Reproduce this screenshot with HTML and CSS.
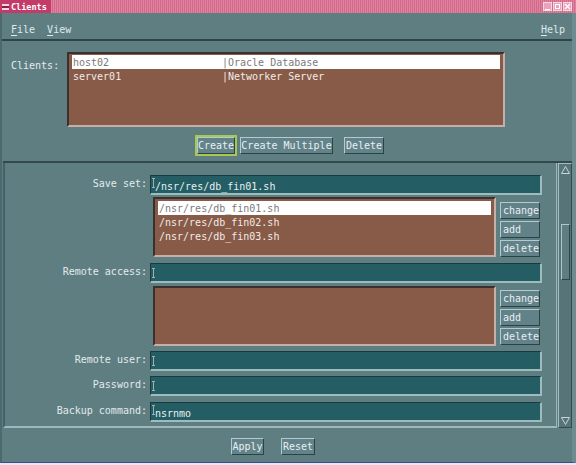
FILE: index.html
```html
<!DOCTYPE html>
<html>
<head>
<meta charset="utf-8">
<title>Clients</title>
<link rel="stylesheet" href="styles.css">
</head>
<body>
<div class="titlebar">
  <div class="title"><span class="ticon"></span><span class="ttext">Clients</span></div>
  <div class="tfill"></div>
  <div class="wbtns">
    <span class="wb"><svg width="9" height="9" viewBox="0 0 9 9"><path d="M2 7.5H7" stroke="#fff" stroke-width="1"/></svg></span>
    <span class="wb"><svg width="9" height="9" viewBox="0 0 9 9"><rect x="2.5" y="2.5" width="4" height="4" fill="none" stroke="#fff" stroke-width="1"/></svg></span>
    <span class="wb"><svg width="9" height="9" viewBox="0 0 9 9"><path d="M2 2L7 7M7 2L2 7" stroke="#fff" stroke-width="1.4"/></svg></span>
  </div>
</div>
<div class="window">
  <div class="menubar">
    <span class="menu"><u>F</u>ile</span>
    <span class="menu"><u>V</u>iew</span>
    <span class="menu menu-help"><u>H</u>elp</span>
  </div>
  <div class="top">
    <div class="clients">
      <div class="clabel">Clients:</div>
      <div class="list clist">
        <div class="row sel"><span class="c1">host02</span><span>|Oracle Database</span></div>
        <div class="row"><span class="c1">server01</span><span>|Networker Server</span></div>
      </div>
    </div>
    <div class="actions">
      <span class="focus"><span class="btn btn-create">Create</span></span>
      <span class="btn btn-multi">Create Multiple</span>
      <span class="btn btn-del">Delete</span>
    </div>
  </div>
  <div class="panel">
    <div class="form">
      <div class="frow">
        <div class="flabel">Save set:</div>
        <div class="field filled"><span class="caret"><svg width="3" height="10" viewBox="0 0 3 10"><path d="M0 0.5H3M1.5 0.5V9.5M0 9.5H3" stroke="#9fb0b2" stroke-width="1"/></svg></span><span>/nsr/res/db_fin01.sh</span></div>
      </div>
      <div class="lrow lrow-1">
        <div class="list slist">
          <div class="row sel">/nsr/res/db_fin01.sh</div>
          <div class="row">/nsr/res/db_fin02.sh</div>
          <div class="row">/nsr/res/db_fin03.sh</div>
        </div>
        <div class="lbtns">
          <span class="sbtn">change</span>
          <span class="sbtn">add</span>
          <span class="sbtn">delete</span>
        </div>
      </div>
      <div class="frow frow-ra">
        <div class="flabel">Remote access:</div>
        <div class="field"><span class="caret"><svg width="3" height="10" viewBox="0 0 3 10"><path d="M0 0.5H3M1.5 0.5V9.5M0 9.5H3" stroke="#9fb0b2" stroke-width="1"/></svg></span></div>
      </div>
      <div class="lrow lrow-2">
        <div class="list slist"></div>
        <div class="lbtns">
          <span class="sbtn">change</span>
          <span class="sbtn">add</span>
          <span class="sbtn">delete</span>
        </div>
      </div>
      <div class="frow frow-ru">
        <div class="flabel">Remote user:</div>
        <div class="field"><span class="caret"><svg width="3" height="10" viewBox="0 0 3 10"><path d="M0 0.5H3M1.5 0.5V9.5M0 9.5H3" stroke="#9fb0b2" stroke-width="1"/></svg></span></div>
      </div>
      <div class="frow frow-pw">
        <div class="flabel">Password:</div>
        <div class="field"><span class="caret"><svg width="3" height="10" viewBox="0 0 3 10"><path d="M0 0.5H3M1.5 0.5V9.5M0 9.5H3" stroke="#9fb0b2" stroke-width="1"/></svg></span></div>
      </div>
      <div class="frow frow-bc">
        <div class="flabel">Backup command:</div>
        <div class="field filled"><span class="caret"><svg width="3" height="10" viewBox="0 0 3 10"><path d="M0 0.5H3M1.5 0.5V9.5M0 9.5H3" stroke="#9fb0b2" stroke-width="1"/></svg></span><span>nsrnmo</span></div>
      </div>
    </div>
    <div class="vscroll">
      <div class="arrow"><svg width="11" height="10" viewBox="0 0 11 10"><path d="M5.5 1.5L9.5 8.5H1.5Z" fill="none" stroke="#c4d6d8" stroke-width="1"/></svg></div>
      <div class="trough"><div class="thumb"></div></div>
      <div class="arrow"><svg width="11" height="10" viewBox="0 0 11 10"><path d="M1.5 1.5H9.5L5.5 8.5Z" fill="none" stroke="#c4d6d8" stroke-width="1"/></svg></div>
    </div>
  </div>
  <div class="bottom">
    <span class="btn btn-apply">Apply</span>
    <span class="btn btn-reset">Reset</span>
  </div>
</div>
</body>
</html>
```

FILE: styles.css
```css
* { box-sizing: border-box; }
html, body { margin: 0; padding: 0; }
body {
  width: 576px;
  height: 465px;
  overflow: hidden;
  background: #e6e8f0;
  font-family: "DejaVu Sans Mono", "Liberation Mono", monospace;
  font-size: 10px;
  color: #e4eced;
}

/* title bar */
.titlebar {
  height: 13px;
  display: flex;
  background: repeating-linear-gradient(90deg, #d4688a 0 1px, #de849f 1px 2px);
}
.title {
  width: 51px;
  display: flex;
  align-items: center;
  background: #c33b69;
  padding-left: 2px;
}
.ticon {
  width: 7px;
  height: 6px;
  border-top: 2px solid #f4d6e0;
  border-bottom: 2px solid #f4d6e0;
  background: #8a2048;
  margin-right: 2px;
}
.ttext {
  font-weight: bold;
  font-size: 8.5px;
  color: #ffffff;
  line-height: 12px;
}
.tfill { flex: 1; }
.wbtns {
  display: flex;
  gap: 1px;
  padding: 2px 4px 0 0;
}
.wb {
  width: 9px;
  height: 9px;
  background: #e8a2ba;
  border: 1px solid #f6d8e2;
  display: flex;
}
.wb svg { margin: -1px; }

/* window */
.window {
  height: 450px;
  background: #5f7e82;
  border-left: 2px solid #4c6a6e;
  border-right: 4px solid #6d8c90;
  border-bottom: 1px solid #3a4a8e;
  display: flex;
  flex-direction: column;
}

.menubar {
  height: 28px;
  display: flex;
  padding: 10px 0 0 9px;
  line-height: 13px;
  border-bottom: 2px solid #2f4649;
}
.menu { margin-right: 12px; color: #dfe9ea; }
.menu u { text-decoration-thickness: 1px; text-underline-offset: 2px; }
.menu-help { margin-left: auto; margin-right: 7px; }

/* top area */
.top {
  height: 120px;
  padding: 11px 0 0 9px;
}
.clients { display: flex; }
.clabel {
  width: 56px;
  margin-top: 7px;
  line-height: 14px;
}
.list {
  background: #885a48;
  border: 2px solid;
  border-color: #3a302c #c4b0a8 #c4b0a8 #3a302c;
  color: #f2ebe6;
}
.clist {
  width: 438px;
  height: 75px;
  padding: 1px 3px;
}
.row {
  height: 14px;
  line-height: 15px;
  padding-left: 1px;
  white-space: pre;
}
.row.sel {
  background: #ffffff;
  color: #7a7a7a;
}
.c1 { display: inline-block; width: 149px; }

.actions {
  display: flex;
  align-items: center;
  height: 20px;
  margin-top: 8px;
  padding-left: 184px;
}
.focus {
  display: flex;
  border: 2px solid #a9c853;
  margin-right: 3px;
}
.btn {
  display: inline-block;
  height: 17px;
  line-height: 15px;
  padding: 0;
  text-align: center;
  overflow: hidden;
  background: #63838a;
  border: 1px solid;
  border-color: #b4cacc #2c4346 #2c4346 #b4cacc;
  color: #e8eff0;
  white-space: pre;
}
.btn-create { width: 38px; }
.btn-multi { width: 93px; }
.btn-del { width: 40px; margin-left: 11px; }
.btn-apply { width: 33px; }
.btn-reset { width: 34px; }

/* scroll panel */
.panel {
  height: 267px;
  margin-left: 1px;
  display: flex;
  border-top: 2px solid #34494c;
}
.form {
  flex: 1;
  padding: 12px 0 4px 0;
  border-left: 2px solid #44606a;
  border-right: 1px solid #9db8ba;
  border-bottom: 2px solid #9db8ba;
}
.frow {
  display: grid;
  grid-template-columns: 142px 392px;
  column-gap: 3px;
  height: 20px;
}
.flabel {
  text-align: right;
  line-height: 14px;
  padding-top: 2px;
  color: #e2eaeb;
}
.field {
  display: flex;
  align-items: center;
  height: 20px;
  padding-left: 1px;
  background: #245d64;
  border: 1px solid;
  border-width: 1px 2px 2px 1px;
  border-color: #173b40 #9cbcbe #9cbcbe #173b40;
  color: #e8f0f0;
}
.field.filled { align-items: flex-start; }
.field.filled .caret { margin-top: 2px; }
.field.filled span + span { line-height: 15px; margin-top: 3px; }
.caret { display: flex; }

.lrow {
  display: flex;
  gap: 4px;
  padding-left: 148px;
  margin-top: 2px;
}
.lrow-2 { margin-top: 3px; }
.slist {
  width: 343px;
  height: 60px;
  padding: 2px 3px;
}
.lbtns {
  display: flex;
  flex-direction: column;
  gap: 2px;
  padding-top: 5px;
}
.lrow-2 .lbtns { padding-top: 4px; }
.sbtn {
  width: 40px;
  height: 17px;
  line-height: 15px;
  padding-left: 2px;
  background: #62828a;
  border: 1px solid;
  border-color: #b4cacc #2c4346 #2c4346 #b4cacc;
  color: #e8eff0;
}
.frow-ra { margin-top: 6px; }
.frow-ru { margin-top: 5px; }
.frow-pw { margin-top: 5px; }
.frow-bc { margin-top: 6px; }

.vscroll {
  width: 14px;
  margin-left: 1px;
  display: flex;
  flex-direction: column;
  background: #577478;
  border: 1px solid;
  border-color: #a4bec0 #33494c #33494c #a4bec0;
}
.arrow {
  height: 12px;
  display: flex;
  align-items: center;
  justify-content: center;
}
.trough {
  flex: 1;
  padding: 48px 1px 0 2px;
}
.thumb {
  height: 56px;
  background: #5f7e82;
  border: 1px solid;
  border-color: #b0c8ca #2f4548 #2f4548 #b0c8ca;
}

/* bottom */
.bottom {
  height: 34px;
  display: flex;
  gap: 17px;
  padding: 10px 0 0 229px;
}
```
